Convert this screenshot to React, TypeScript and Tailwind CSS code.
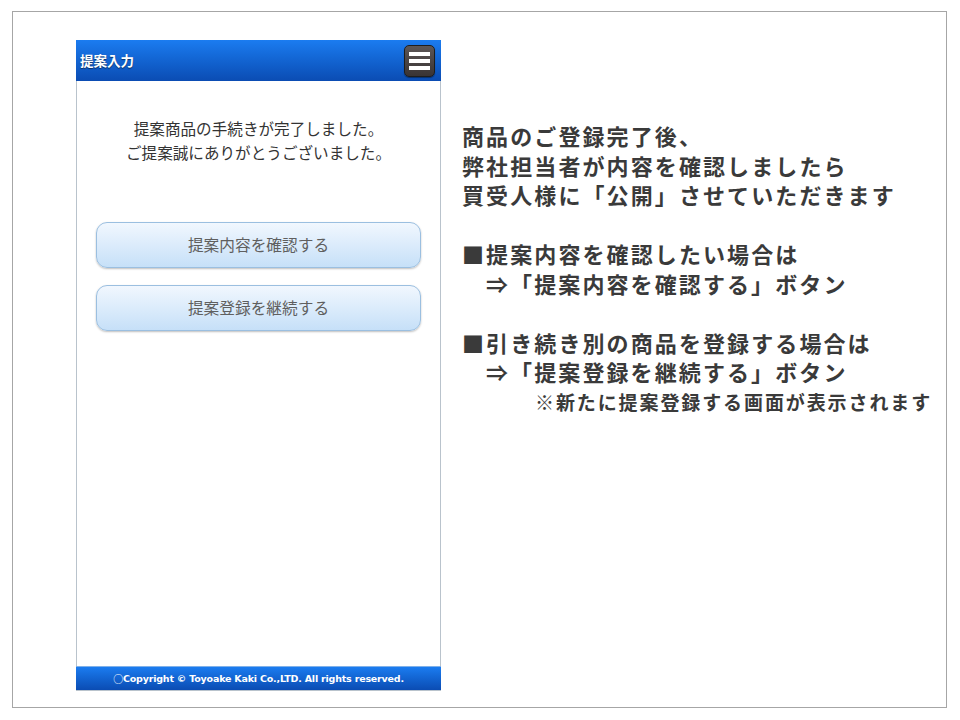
export default function App() {
  const jp = { fontFamily: '"Noto Sans CJK JP", "Noto Sans", sans-serif' };

  return (
    <div className="w-[960px] h-[720px] bg-white pt-[11px] pl-[12px]" style={jp}>
      {/* Slide frame */}
      <div className="w-[935px] h-[697px] border border-[#a6a6a6] flex pl-[63px] pt-[28px]">
        {/* Phone screen */}
        <div className="w-[365px] h-[651px] border border-[#b9c3cc] flex flex-col bg-white">
          {/* Header */}
          <div className="h-[41px] -mx-px -mt-px flex items-center justify-between pl-[4px] pr-[6px] bg-gradient-to-b from-[#1b7cf0] to-[#0b4cb3]">
            <span className="text-white font-bold text-[13.5px] [text-shadow:0_1px_1px_rgba(0,0,0,0.5)]">
              提案入力
            </span>
            <button className="w-[31px] h-[32px] rounded-[5px] border border-[#1e1e1e] bg-gradient-to-b from-[#5c5656] to-[#3a3434] flex flex-col items-center justify-center gap-[3px] shadow-[0_1px_1px_rgba(0,0,0,0.4)]">
              <span className="w-[21px] h-[4px] bg-white" />
              <span className="w-[21px] h-[4px] bg-white" />
              <span className="w-[21px] h-[4px] bg-white" />
            </button>
          </div>

          {/* Body */}
          <div className="flex-1 flex flex-col items-center pt-[35px]">
            <p className="text-[15.6px] leading-[24px] text-[#333] text-center">
              提案商品の手続きが完了しました。
              <br />
              ご提案誠にありがとうございました。
            </p>

            <div className="mt-[58px] flex flex-col gap-[17px]">
              <button className="w-[325px] h-[46px] rounded-[11px] border border-[#9bbfe0] bg-gradient-to-b from-[#f1f7fe] to-[#c6e0f8] text-[15.7px] text-[#5f5f5f] shadow-[0_1px_2px_rgba(0,0,0,0.25)]">
                提案内容を確認する
              </button>
              <button className="w-[325px] h-[46px] rounded-[11px] border border-[#9bbfe0] bg-gradient-to-b from-[#f1f7fe] to-[#c6e0f8] text-[15.7px] text-[#5f5f5f] shadow-[0_1px_2px_rgba(0,0,0,0.25)]">
                提案登録を継続する
              </button>
            </div>
          </div>

          {/* Footer */}
          <div className="h-[24px] -mx-px flex items-center justify-center bg-gradient-to-b from-[#1b7cf0] to-[#0b4cb3] border-t border-[#7fb0e8]">
            <span className="flex items-center text-white font-bold text-[9.5px] leading-none [font-family:Verdana,'DejaVu_Sans',sans-serif] tracking-[-0.2px]">
              <span className="text-[10px] font-normal leading-none [font-family:'Noto_Sans_CJK_JP',sans-serif]">○</span>
              Copyright © Toyoake Kaki Co.,LTD. All rights reserved.
            </span>
          </div>
        </div>

        {/* Explanation */}
        <div className="ml-[21px] pt-[81px] text-[#3a3a3a] font-bold text-[22px] leading-[29.5px] tracking-[2.1px] whitespace-nowrap">
          <p>商品のご登録完了後、</p>
          <p>弊社担当者が内容を確認しましたら</p>
          <p>買受人様に「公開」させていただきます</p>
          <p>&nbsp;</p>
          <p>■提案内容を確認したい場合は</p>
          <p className="pl-[24px]">⇒「提案内容を確認する」ボタン</p>
          <p>&nbsp;</p>
          <p>■引き続き別の商品を登録する場合は</p>
          <p className="pl-[24px]">⇒「提案登録を継続する」ボタン</p>
          <p className="pl-[73px] text-[19px] tracking-[1.9px]">※新たに提案登録する画面が表示されます</p>
        </div>
      </div>
    </div>
  );
}
